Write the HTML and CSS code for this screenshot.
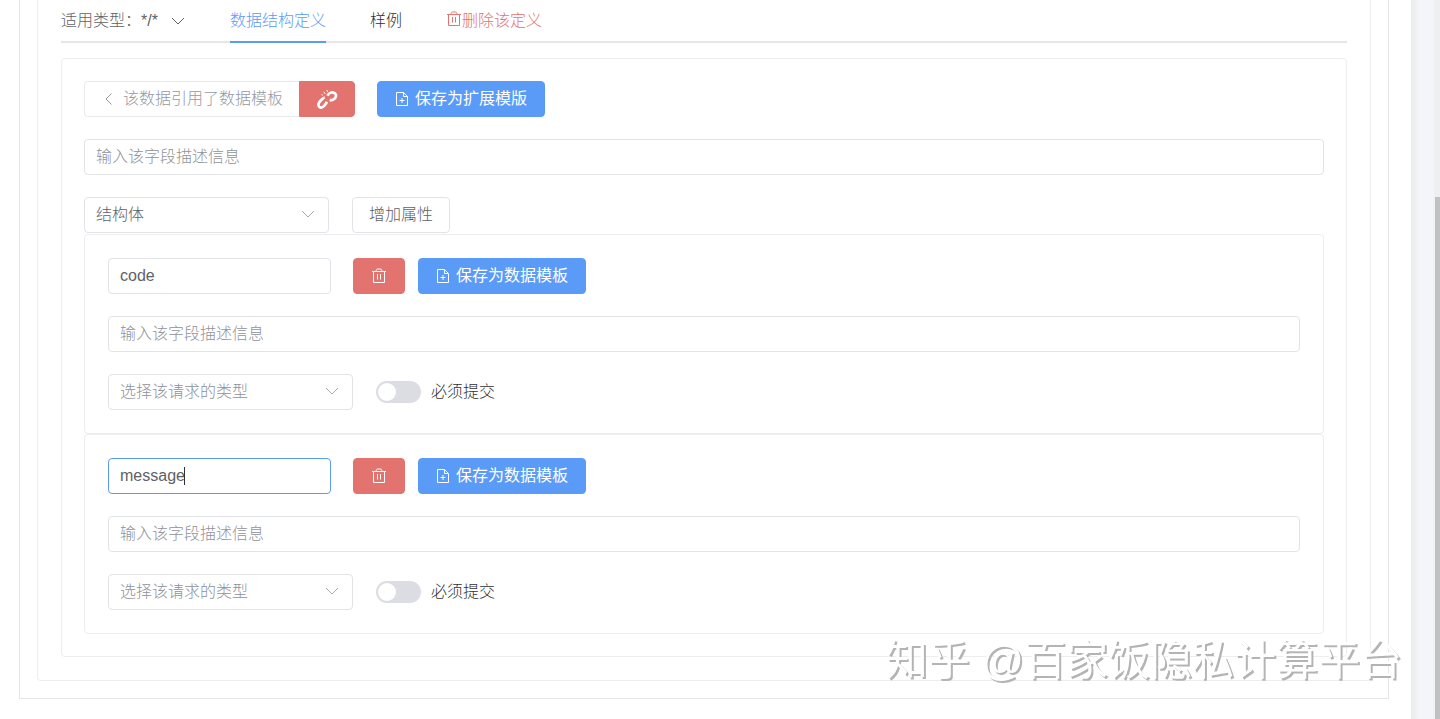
FILE: index.html
```
<!DOCTYPE html>
<html lang="zh-CN">
<head>
    <meta charset="UTF-8">
    <meta name="viewport" content="width=device-width, initial-scale=1.0">
    <title>数据结构定义</title>
    <link rel="stylesheet" href="styles.css">
</head>
<body>
    <!-- shared icons -->
    <svg class="sprite" aria-hidden="true">
        <symbol id="icon-down" viewBox="0 0 16 16"><path d="M2 5l6 6 6-6"/></symbol>
        <symbol id="icon-left" viewBox="0 0 16 16"><path d="M10.500 2.500 5 8l5.500 5.500"/></symbol>
        <symbol id="icon-delete" viewBox="0 0 16 16">
            <path d="M1 3.500h14M2.500 3.500v11h11v-11M5 3.500c0-1.500.6-2.500 1.500-2.500h3c.9 0 1.500 1 1.500 2.500M6.500 6v5.500M9.500 6v5.500"/>
        </symbol>
        <symbol id="icon-doc-add" viewBox="0 0 14 14">
            <path d="M8.500.5h-7v13h11v-9zM8.500.5v4h4M4.500 8.500h5M7 6v5"/>
        </symbol>
        <symbol id="icon-unlink" viewBox="0 0 24 24">
            <path d="M9.500 10.500C7.500 10.500 3.500 15 2.800 17c-.8 2.500.8 4.500 3 4.300 2.400-.2 5.200-3.800 6-6.300M12.500 8.500c1-2.500 4-4 6.500-3.500 2.700.6 3.600 3.300 2.300 5.400-1.200 2-4.300 3.200-6.300 2.600"/>
            <path class="thin" d="M10 6.500 8.500 4M12.500 4.500 12 2M7.500 8 6 7"/>
        </symbol>
    </svg>

    <div class="page">
        <main class="panel">
            <div class="outer">
                <div class="inner">
                    <nav class="tabs">
                        <button type="button" class="type-picker">适用类型：*/*
                            <svg class="icon"><use href="#icon-down"/></svg>
                        </button>
                        <a href="#define" class="tab active">数据结构定义</a>
                        <a href="#sample" class="tab">样例</a>
                        <a href="#delete" class="tab danger"><svg class="icon"><use href="#icon-delete"/></svg>删除该定义</a>
                    </nav>

                    <section class="card" id="define">
                        <div class="row">
                            <div class="btn-group">
                                <button type="button" class="btn plain" disabled><svg class="icon"><use href="#icon-left"/></svg>该数据引用了数据模板</button>
                                <button type="button" class="btn red unlink" aria-label="解除引用"><svg class="icon"><use href="#icon-unlink"/></svg></button>
                            </div>
                            <button type="button" class="btn blue"><svg class="icon"><use href="#icon-doc-add"/></svg>保存为扩展模版</button>
                        </div>
                        <input type="text" class="field" placeholder="输入该字段描述信息" aria-label="字段描述">
                        <div class="row wide">
                            <div class="select">
                                <select aria-label="数据类型">
                                    <option>结构体</option>
                                </select>
                                <svg class="icon"><use href="#icon-down"/></svg>
                            </div>
                            <button type="button" class="btn add">增加属性</button>
                        </div>

                        <div class="props">
                            <div class="card">
                                <div class="row">
                                    <div class="name">
                                        <input type="text" class="field" value="code" aria-label="属性名">
                                    </div>
                                    <div class="actions">
                                        <button type="button" class="btn red" aria-label="删除"><svg class="icon"><use href="#icon-delete"/></svg></button>
                                        <button type="button" class="btn blue"><svg class="icon"><use href="#icon-doc-add"/></svg>保存为数据模板</button>
                                    </div>
                                </div>
                                <input type="text" class="field" placeholder="输入该字段描述信息" aria-label="字段描述">
                                <div class="row wide">
                                    <div class="select">
                                        <select class="empty" aria-label="请求类型">
                                            <option>选择该请求的类型</option>
                                        </select>
                                        <svg class="icon"><use href="#icon-down"/></svg>
                                    </div>
                                    <label class="switch"><input type="checkbox">必须提交</label>
                                </div>
                            </div>

                            <div class="card">
                                <div class="row">
                                    <div class="name editing">
                                        <input type="text" class="field" id="current" value="message" aria-label="属性名">
                                    </div>
                                    <div class="actions">
                                        <button type="button" class="btn red" aria-label="删除"><svg class="icon"><use href="#icon-delete"/></svg></button>
                                        <button type="button" class="btn blue"><svg class="icon"><use href="#icon-doc-add"/></svg>保存为数据模板</button>
                                    </div>
                                </div>
                                <input type="text" class="field" placeholder="输入该字段描述信息" aria-label="字段描述">
                                <div class="row wide">
                                    <div class="select">
                                        <select class="empty" aria-label="请求类型">
                                            <option>选择该请求的类型</option>
                                        </select>
                                        <svg class="icon"><use href="#icon-down"/></svg>
                                    </div>
                                    <label class="switch"><input type="checkbox">必须提交</label>
                                </div>
                            </div>
                        </div>
                    </section>
                </div>
            </div>
        </main>
        <div class="scrollbar"><div class="thumb"></div></div>
    </div>
    <div class="watermark">知乎 @百家饭隐私计算平台</div>

    <script>
        let current = document.getElementById("current");
        current.focus();
        current.setSelectionRange(current.value.length, current.value.length);
        // the steady caret goes away once the user types
        current.addEventListener("input", function() {
            current.parentElement.classList.remove("editing");
        });
    </script>
</body>
</html>
```
FILE: styles.css
```
* { box-sizing: border-box; }
body { margin: 0; background: #f3f5f8; color: #606266; overflow: hidden; }
body, button, input, select { font-family: "Liberation Sans", "Noto Sans CJK SC", sans-serif; font-size: 16px; font-weight: 300; line-height: 24px; }

.sprite { display: none; }
.icon { width: 16px; height: 16px; flex: none; fill: none; stroke: currentColor; stroke-width: 1; }

.page { display: flex; min-height: 100vh; }
.panel { flex: 1; padding: 0 22px 20px 19px; background: #fff; }
.outer { border: 1px solid #e4e6ea; border-top: 0; padding: 0 17px 17px; }
.inner { border: 1px solid #ebedf0; border-top: 0; border-radius: 0 0 4px 4px; padding: 0 23px 23px; }

.tabs { display: flex; gap: 44px; height: 43px; border-bottom: 2px solid #e4e6ea; margin-bottom: 15px; }
.type-picker { display: flex; align-items: center; gap: 12px; padding: 0; border: 0; background: none; color: #606266; }
.tab { display: flex; align-items: center; height: 43px; border-bottom: 2px solid transparent; color: #303133; text-decoration: none; }
.tab.active { color: #5b9bf8; border-color: #5b9bf8; }
.tab.danger { color: #e2736f; }
.tab .icon { margin-bottom: 4px; }

.card { display: flex; flex-direction: column; gap: 22px; padding: 22px; border: 1px solid #ebedf0; border-radius: 4px; }
.card .card { padding: 23px; }
.row { display: flex; align-items: center; gap: 22px; }
.row.wide { gap: 23px; }
.props { margin-top: -21px; }

.btn { display: flex; align-items: center; justify-content: center; gap: 6px; height: 36px; padding: 0 17px; border: 1px solid #e1e3e7; border-radius: 4px; background: #fff; color: #606266; cursor: pointer; }
.btn.blue { background: #5b9bf8; border-color: #5b9bf8; color: #fff; font-weight: 400; }
.btn.blue .icon { width: 14px; height: 14px; }
.btn.red { background: #e2736f; border-color: #e2736f; color: #fff; }
.btn.plain { color: #969aa1; border-color: #e8eaee; padding: 0 16px; }
.btn.add { padding: 0 16px; }
.btn-group { display: flex; }
.btn-group .btn:first-child { border-right: 0; border-radius: 4px 0 0 4px; }
.btn-group .btn:last-child { border-radius: 0 4px 4px 0; }
.btn.unlink { padding: 0 16px; }
.unlink .icon { width: 22px; height: 22px; stroke-width: 3; }
.thin { stroke-width: 1; }
.actions { display: flex; gap: 13px; }

.field { display: block; width: 100%; height: 36px; padding: 0 11px; border: 1px solid #e1e3e7; border-radius: 4px; background: #fff; color: #606266; outline: 0; }
.field::placeholder { color: #8f9299; opacity: 1; }
.field:focus { border-color: #5b9bf8; }
.name { position: relative; width: 223px; }
.editing .field { caret-color: transparent; }
.editing::after { content: ""; position: absolute; left: 76px; top: 9px; width: 1px; height: 18px; background: #303133; }

.select { position: relative; width: 245px; }
.select select { display: block; width: 100%; height: 36px; padding: 0 11px; border: 1px solid #e1e3e7; border-radius: 4px; background: #fff; color: #606266; appearance: none; }
.select select.empty { color: #8f9299; }
.select .icon { position: absolute; right: 13px; top: 9px; color: #a8abb2; pointer-events: none; }

.switch { display: flex; align-items: center; gap: 10px; color: #303133; }
.switch input { width: 45px; height: 22px; margin: 0; padding: 2px; border-radius: 11px; background: #dcdde2; appearance: none; }
.switch input::before { content: ""; display: block; width: 18px; height: 18px; border-radius: 50%; background: #fff; }
.switch input:checked { background: #5b9bf8; }
.switch input:checked::before { margin-left: auto; }

.scrollbar { width: 29px; padding-top: 197px; display: flex; justify-content: flex-end; background: linear-gradient(to right, #e9ecef, #f3f5f8 8px, #f3f5f8 22px, #eeeff1 24px); }
.thumb { width: 5px; background: #c1c1c3; }

.watermark { position: fixed; right: 38px; bottom: 28px; font: 400 42px/60px "Liberation Sans", "Noto Sans CJK SC", sans-serif; color: #fff; text-shadow: 2px 2px 0 #b4b4b4; pointer-events: none; }
```
